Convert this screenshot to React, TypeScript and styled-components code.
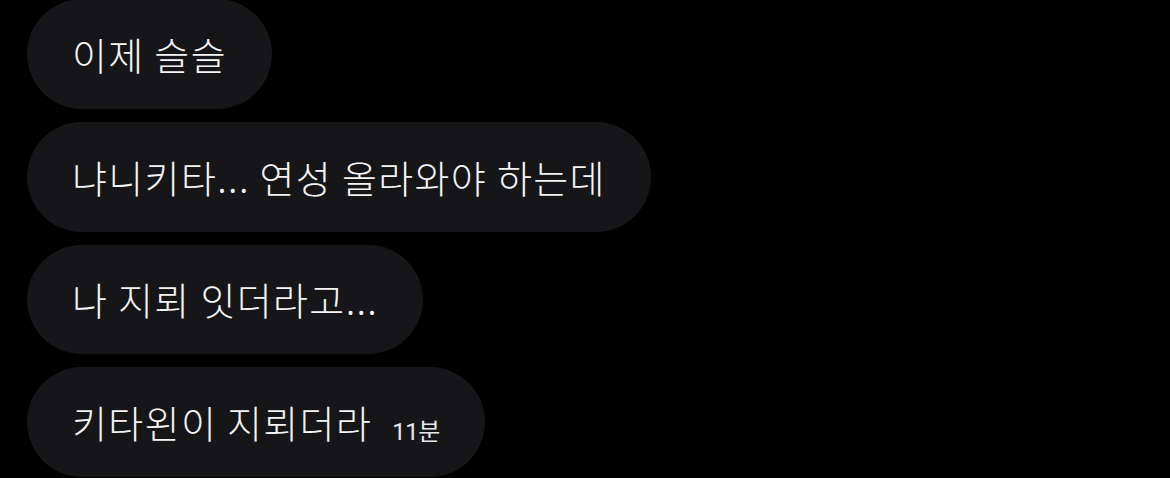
import styled, { createGlobalStyle } from 'styled-components';

const GlobalStyle = createGlobalStyle`
  html, body {
    margin: 0;
    padding: 0;
    background: #000000;
  }
  body {
    font-family: "Noto Sans CJK KR", "Noto Sans", sans-serif;
    overflow: hidden;
  }
`;

type Message = {
  id: number;
  text: string;
  time?: string;
};

const messages: Message[] = [
  { id: 1, text: '이제 슬슬' },
  { id: 2, text: '냐니키타... 연성 올라와야 하는데' },
  { id: 3, text: '나 지뢰 잇더라고...' },
  { id: 4, text: '키타왼이 지뢰더라', time: '11분' },
];

export default function App() {
  return (
    <>
      <GlobalStyle />
      <Style.Container>
        {messages.map((message) => (
          <Style.Bubble key={message.id}>
            <Style.Text>{message.text}</Style.Text>
            {message.time && <Style.Time>{message.time}</Style.Time>}
          </Style.Bubble>
        ))}
      </Style.Container>
    </>
  );
}

const Style = {
  Container: styled.main`
    width: 1170px;
    height: 478px;

    display: flex;
    flex-direction: column;
    align-items: flex-start;
    gap: 13px;

    margin-top: -1px;
    padding-left: 27px;
    box-sizing: border-box;
  `,
  Bubble: styled.div`
    height: 110px;

    display: flex;
    align-items: center;
    gap: 20px;

    padding: 0 45px;
    box-sizing: border-box;
    border-radius: 55px;
    background-color: #161618;
    color: #f4f4f4;
  `,
  Text: styled.span`
    font-size: 38px;
    font-weight: 300;
    letter-spacing: 1.35px;
    line-height: 1;
    white-space: nowrap;
  `,
  Time: styled.span`
    margin-top: 20px;

    font-family: "Roboto", "Noto Sans CJK KR", sans-serif;
    font-size: 24px;
    font-weight: 400;
    letter-spacing: -0.5px;
    line-height: 1;
    color: #e8e8e8;
  `,
};
